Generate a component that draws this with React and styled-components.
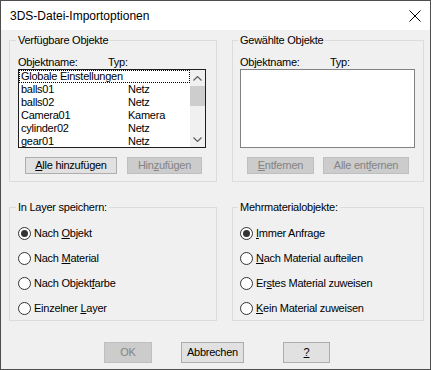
import React from 'react';
import styled, { createGlobalStyle } from 'styled-components';

const GlobalStyle = createGlobalStyle`
  html, body {
    margin: 0;
    padding: 0;
    background: #f0f0f0;
  }
  body {
    font-family: 'Liberation Sans', Arial, sans-serif;
    font-size: 11px;
    letter-spacing: -0.25px;
    color: #000;
  }
`;

const Window = styled.div`
  width: 431px;
  height: 370px;
  box-sizing: border-box;
  border: 1px solid #4e4e4e;
  background: #f0f0f0;
  display: flex;
  flex-direction: column;
`;

const TitleBar = styled.div`
  height: 29px;
  flex: none;
  background: #fff;
  display: flex;
  align-items: center;
  justify-content: space-between;
  padding: 0 9px 0 9px;
`;

const TitleText = styled.span`
  font-size: 12px;
  line-height: 14px;
  letter-spacing: 0;
  color: #000;
`;

const Body = styled.div`
  flex: 1;
  display: flex;
  flex-direction: column;
  padding: 4px 6px 6px 8px;
`;

const Columns = styled.div`
  display: grid;
  grid-template-columns: 208px 192px;
  column-gap: 15px;
  margin-bottom: ${props => props.$gap || '0'};
`;

const Group = styled.fieldset`
  margin: 0;
  min-width: 0;
  border: 1px solid #dcdcdc;
  padding: ${props => props.$pad};
  display: flex;
  flex-direction: column;
`;

const GroupTitle = styled.legend`
  padding: 0 2px;
  margin-left: -2px;
  font-size: 11px;
  line-height: 13px;
`;

const HeaderRow = styled.div`
  display: grid;
  grid-template-columns: 90px 1fr;
  line-height: 13px;
  height: 13px;
`;

const ListBox = styled.div`
  height: 79px;
  box-sizing: border-box;
  border: 1px solid ${props => (props.$focused ? '#1e1e1e' : '#828282')};
  background: #fff;
  display: flex;
  overflow: hidden;
`;

const Rows = styled.div`
  flex: 1;
  min-width: 0;
`;

const ListRow = styled.div`
  display: grid;
  grid-template-columns: 107px 1fr;
  height: 13px;
  line-height: 13px;
  padding-left: 2px;
  white-space: nowrap;
  outline: ${props => (props.$focus ? '1px dotted #000' : 'none')};
  outline-offset: -1px;
`;

const ScrollBar = styled.div`
  width: 15px;
  flex: none;
  background: #f0f0f0;
  display: flex;
  flex-direction: column;
`;

const ScrollArrow = styled.div`
  height: 16px;
  flex: none;
  display: flex;
  align-items: center;
  justify-content: center;
`;

const ScrollThumb = styled.div`
  height: 20px;
  flex: none;
  background: #cdcdcd;
`;

const ScrollTrack = styled.div`
  flex: 1;
`;

const ButtonRow = styled.div`
  display: flex;
  gap: ${props => props.$gap};
  padding-left: ${props => props.$indent || '7px'};
  margin-top: ${props => props.$top || '9px'};
`;

const Button = styled.button`
  width: ${props => props.$w};
  height: ${props => props.$h || '17px'};
  box-sizing: border-box;
  margin: 0;
  padding: 0;
  font-family: 'Liberation Sans', Arial, sans-serif;
  font-size: 11px;
  letter-spacing: -0.25px;
  line-height: 13px;
  border: 1px solid ${props => (props.disabled ? '#bfbfbf' : '#adadad')};
  background: ${props => (props.disabled ? '#cccccc' : '#e1e1e1')};
  color: ${props => (props.disabled ? '#838383' : '#000')};
  margin-left: ${props => props.$ml || '0'};
`;

const RadioList = styled.div`
  display: flex;
  flex-direction: column;
  gap: 12px;
  padding-top: 13px;
`;

const RadioRow = styled.label`
  display: flex;
  align-items: center;
  gap: 3px;
  height: 13px;
  line-height: 13px;
`;

const RadioCircle = styled.span`
  width: 13px;
  height: 13px;
  box-sizing: border-box;
  border-radius: 50%;
  border: 1px solid #333;
  background: #fff;
  display: flex;
  align-items: center;
  justify-content: center;
  flex: none;

  &::after {
    content: '';
    width: 7px;
    height: 7px;
    border-radius: 50%;
    background: ${props => (props.$checked ? '#333' : 'transparent')};
  }
`;

const Footer = styled.div`
  display: flex;
  margin-top: 21px;
  padding-left: 95px;
`;

const Chevron = ({ up }) => (
  <svg width="9" height="5" viewBox="0 0 9 5">
    <polyline
      points={up ? '0.5,4.5 4.5,0.5 8.5,4.5' : '0.5,0.5 4.5,4.5 8.5,0.5'}
      fill="none"
      stroke="#606060"
      strokeWidth="1.2"
    />
  </svg>
);

const CloseIcon = () => (
  <svg width="12" height="12" viewBox="0 0 12 12">
    <path d="M0.5 0.5 L11.5 11.5 M11.5 0.5 L0.5 11.5" stroke="#000" strokeWidth="1" />
  </svg>
);

const objects = [
  { name: 'Globale Einstellungen', type: '' },
  { name: 'balls01', type: 'Netz' },
  { name: 'balls02', type: 'Netz' },
  { name: 'Camera01', type: 'Kamera' },
  { name: 'cylinder02', type: 'Netz' },
  { name: 'gear01', type: 'Netz' }
];

const Radio = ({ checked, children }) => (
  <RadioRow>
    <RadioCircle $checked={checked} />
    <span>{children}</span>
  </RadioRow>
);

const App = () => (
  <>
    <GlobalStyle />
    <Window>
      <TitleBar>
        <TitleText>3DS-Datei-Importoptionen</TitleText>
        <CloseIcon />
      </TitleBar>
      <Body>
        <Columns $gap="19px">
          <Group $pad="9px 10px 7px 8px">
            <GroupTitle>Verfügbare Objekte</GroupTitle>
            <HeaderRow>
              <span>Objektname:</span>
              <span>Typ:</span>
            </HeaderRow>
            <ListBox $focused>
              <Rows>
                {objects.map((o, i) => (
                  <ListRow key={o.name} $focus={i === 0}>
                    <span>{o.name}</span>
                    <span>{o.type}</span>
                  </ListRow>
                ))}
              </Rows>
              <ScrollBar>
                <ScrollArrow>
                  <Chevron up />
                </ScrollArrow>
                <ScrollThumb />
                <ScrollTrack />
                <ScrollArrow>
                  <Chevron />
                </ScrollArrow>
              </ScrollBar>
            </ListBox>
            <ButtonRow $gap="10px">
              <Button $w="92px">
                <u>A</u>lle hinzufügen
              </Button>
              <Button $w="75px" disabled>
                Hin<u>z</u>ufügen
              </Button>
            </ButtonRow>
          </Group>
          <Group $pad="9px 8px 7px 7px">
            <GroupTitle>Gewählte Objekte</GroupTitle>
            <HeaderRow>
              <span>Objektname:</span>
              <span>Typ:</span>
            </HeaderRow>
            <ListBox />
            <ButtonRow $gap="9px">
              <Button $w="67px" disabled>
                <u>E</u>ntfernen
              </Button>
              <Button $w="86px" disabled>
                Alle ent<u>f</u>ernen
              </Button>
            </ButtonRow>
          </Group>
        </Columns>
        <Columns>
          <Group $pad="0 8px 5px 8px">
            <GroupTitle>In Layer speichern:</GroupTitle>
            <RadioList>
              <Radio checked>
                Nach <u>O</u>bjekt
              </Radio>
              <Radio>
                Nach <u>M</u>aterial
              </Radio>
              <Radio>
                Nach Objekt<u>f</u>arbe
              </Radio>
              <Radio>
                Einzelner <u>L</u>ayer
              </Radio>
            </RadioList>
          </Group>
          <Group $pad="0 8px 5px 7px">
            <GroupTitle>Mehrmaterialobjekte:</GroupTitle>
            <RadioList>
              <Radio checked>
                <u>I</u>mmer Anfrage
              </Radio>
              <Radio>
                <u>N</u>ach Material aufteilen
              </Radio>
              <Radio>
                Er<u>s</u>tes Material zuweisen
              </Radio>
              <Radio>
                <u>K</u>ein Material zuweisen
              </Radio>
            </RadioList>
          </Group>
        </Columns>
        <Footer>
          <Button $w="48px" $h="21px" disabled>
            OK
          </Button>
          <Button $w="63px" $h="21px" $ml="29px">
            Abbrechen
          </Button>
          <Button $w="47px" $h="21px" $ml="39px">
            <u>?</u>
          </Button>
        </Footer>
      </Body>
    </Window>
  </>
);

export default App;
